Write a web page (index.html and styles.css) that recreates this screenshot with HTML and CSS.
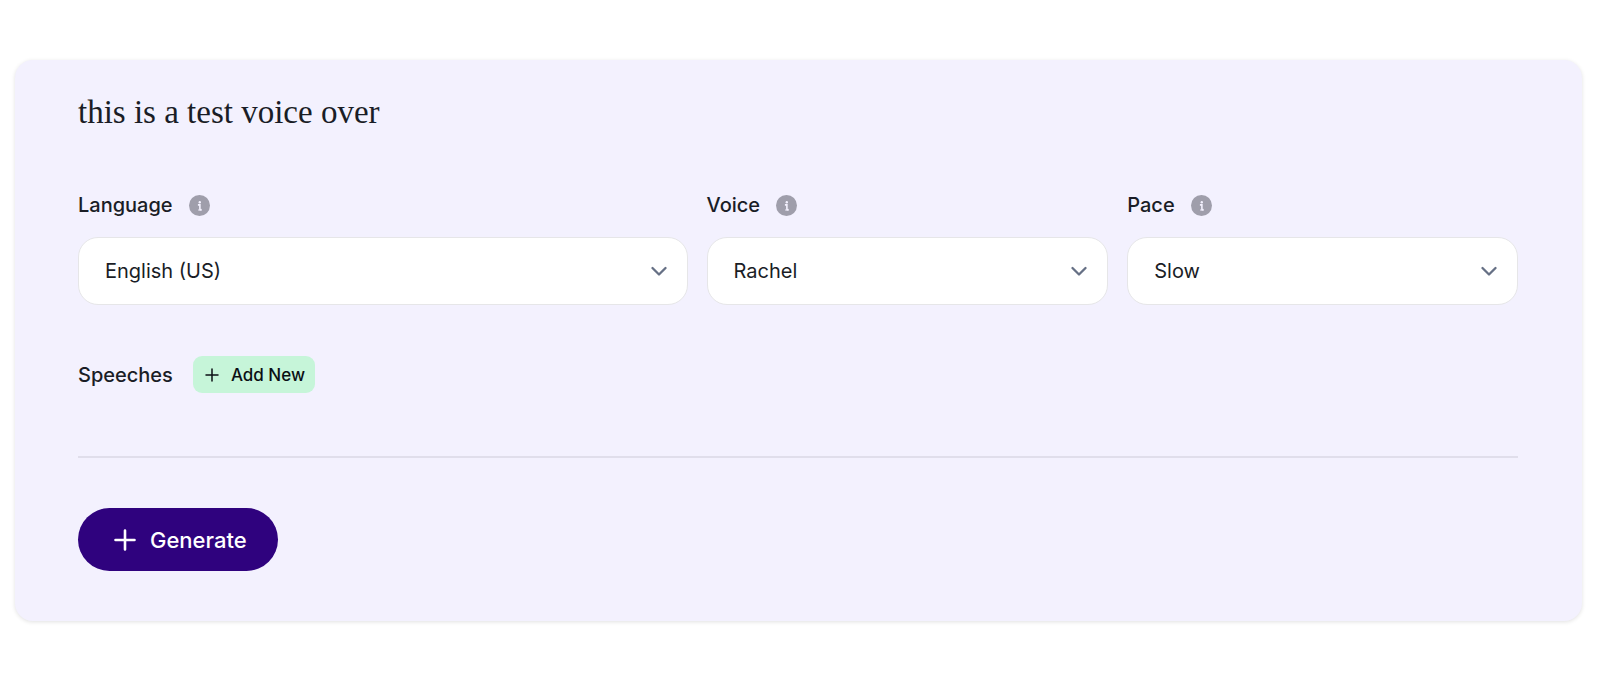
FILE: index.html
```html
<!DOCTYPE html>
<html lang="en">
<head>
    <meta charset="UTF-8">
    <meta name="viewport" content="width=device-width, initial-scale=1.0">
    <title>Voice over</title>
    <link rel="stylesheet" href="styles.css">
</head>
<body>
    <!-- Shared icons -->
    <svg class="sprite" aria-hidden="true">
        <symbol id="info" viewBox="0 0 21 21">
            <circle cx="10.5" cy="10.5" r="10.5" fill="#9f9eab"/>
            <circle cx="10.8" cy="7.3" r="1.2" fill="#f3f1fe"/>
            <path d="M8.9 9.9h2v3.8q0 1.3 1.7 .9" fill="none" stroke="#f3f1fe" stroke-width="1.6"/>
            <path d="M9.3 15h3.2" fill="none" stroke="#f3f1fe" stroke-width="1.2"/>
        </symbol>
        <symbol id="chevron" viewBox="0 0 16 16">
            <path d="M1.5 5l6.5 6.5L14.5 5" fill="none" stroke="#667085" stroke-width="2.3" stroke-linecap="round" stroke-linejoin="round"/>
        </symbol>
    </svg>

    <main class="card">
        <h1>this is a test voice over</h1>

        <div class="fields">
            <div class="field">
                <div class="field-label">
                    <label for="language">Language</label>
                    <svg class="info"><use href="#info"/></svg>
                </div>
                <div class="select">
                    <select id="language">
                        <option>English (US)</option>
                    </select>
                    <svg class="chevron"><use href="#chevron"/></svg>
                </div>
            </div>
            <div class="field">
                <div class="field-label">
                    <label for="voice">Voice</label>
                    <svg class="info"><use href="#info"/></svg>
                </div>
                <div class="select">
                    <select id="voice">
                        <option>Rachel</option>
                    </select>
                    <svg class="chevron"><use href="#chevron"/></svg>
                </div>
            </div>
            <div class="field">
                <div class="field-label">
                    <label for="pace">Pace</label>
                    <svg class="info"><use href="#info"/></svg>
                </div>
                <div class="select">
                    <select id="pace">
                        <option>Slow</option>
                    </select>
                    <svg class="chevron"><use href="#chevron"/></svg>
                </div>
            </div>
        </div>

        <div class="speeches">
            <h2>Speeches</h2>
            <button type="button" class="add-button">
                <svg width="14" height="14" viewBox="0 0 14 14">
                    <path d="M7 1v12M1 7h12" stroke="#0b0f14" stroke-width="1.5" stroke-linecap="round"/>
                </svg>
                Add New
            </button>
        </div>

        <hr>

        <button type="button" class="generate-button">
            <svg width="22" height="22" viewBox="0 0 22 22">
                <path d="M11 1.5v19M1.5 11h19" stroke="#fff" stroke-width="2.6" stroke-linecap="round"/>
            </svg>
            Generate
        </button>
    </main>
</body>
</html>
```
FILE: styles.css
```css
* {
    box-sizing: border-box;
}
body {
    font-family: Inter, "Liberation Sans", sans-serif;
    margin: 0;
    padding: 60px 18px 60px 15px;
    background: #fff;
    color: #1a1d26;
}
.sprite {
    position: absolute;
    width: 0;
    height: 0;
}
.card {
    background: #f3f1fe;
    border-radius: 18px;
    padding: 32px 64px 50px 63px;
    box-shadow: 0 1px 4px rgba(0, 0, 0, 0.12);
}
h1 {
    font-family: "Liberation Serif", serif;
    font-size: 33px;
    font-weight: 400;
    line-height: 40px;
    margin: 0 0 59px;
}
.fields {
    display: grid;
    grid-template-columns: 610fr 402fr 391fr;
    gap: 19px;
}
.field-label {
    display: flex;
    align-items: center;
    gap: 16px;
    margin-bottom: 18px;
    font-size: 20px;
    font-weight: 500;
    line-height: 28px;
}
.info {
    width: 21px;
    height: 21px;
}
.select {
    position: relative;
}
.select select {
    appearance: none;
    display: block;
    width: 100%;
    height: 68px;
    padding: 0 50px 0 26px;
    border: 1px solid #e6e6e8;
    border-radius: 20px;
    background: #fff;
    color: inherit;
    font-family: inherit;
    font-size: 20px;
}
.chevron {
    position: absolute;
    top: 26px;
    right: 21px;
    width: 16px;
    height: 16px;
    pointer-events: none;
}
.speeches {
    display: flex;
    align-items: center;
    gap: 20px;
    margin-top: 51px;
}
h2 {
    font-size: 20px;
    font-weight: 500;
    line-height: 28px;
    margin: 0;
}
button {
    display: inline-flex;
    align-items: center;
    border: 0;
    font-family: inherit;
    font-weight: 500;
    cursor: pointer;
}
.add-button {
    gap: 12px;
    height: 37px;
    padding: 0 10px 0 12px;
    border-radius: 9px;
    background: #c6f5d9;
    color: #0b0f14;
    font-size: 17px;
}
hr {
    height: 2px;
    margin: 63px 0 50px;
    border: 0;
    background: #e0deeb;
}
.generate-button {
    display: flex;
    gap: 14px;
    height: 63px;
    padding: 0 31px 0 36px;
    border-radius: 32px;
    background: #2f027e;
    color: #fff;
    font-size: 22px;
}
```
